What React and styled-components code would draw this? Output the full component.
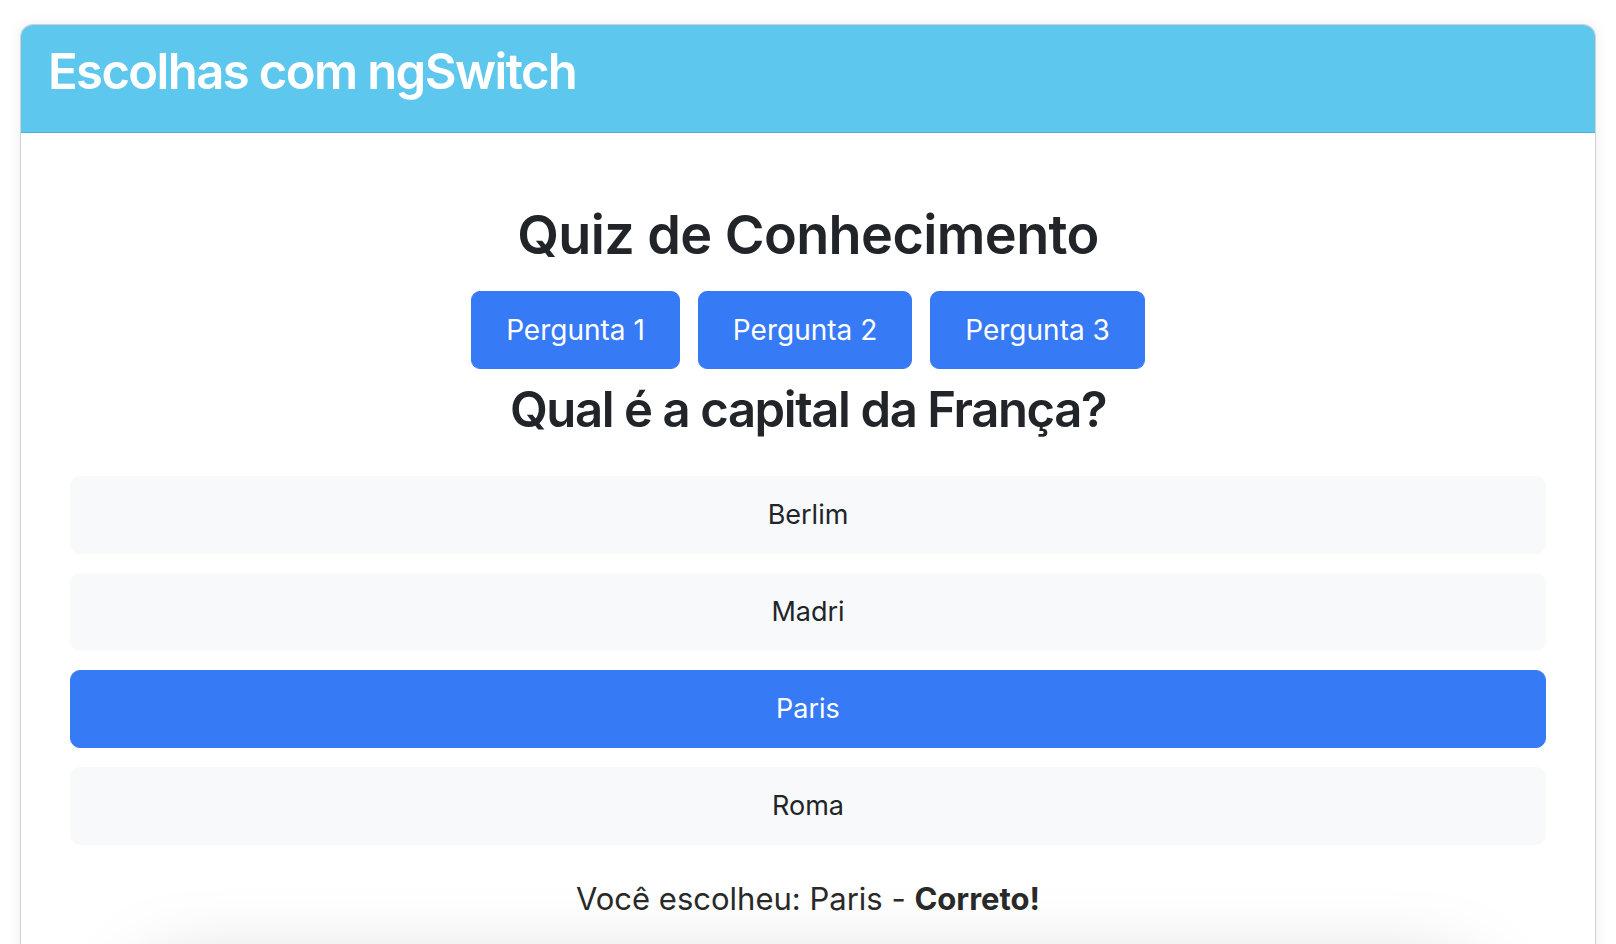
import React, { useState } from 'react';
import styled, { createGlobalStyle } from 'styled-components';

const COLORS = {
  text: '#212529',
  info: '#5ec7ed',
  infoBorder: '#4eaed3',
  primary: '#377af5',
  light: '#f8f9fa',
};

const QUESTIONS = [
  {
    title: 'Qual é a capital da França?',
    options: ['Berlim', 'Madri', 'Paris', 'Roma'],
    answer: 'Paris',
  },
  {
    title: 'Quanto é 2 + 2?',
    options: ['3', '4', '5', '22'],
    answer: '4',
  },
  {
    title: 'Qual é o maior planeta?',
    options: ['Terra', 'Marte', 'Júpiter', 'Vênus'],
    answer: 'Júpiter',
  },
];

const GlobalStyle = createGlobalStyle`
  * {
    box-sizing: border-box;
  }
  body {
    margin: 0;
    background: #ffffff;
    color: ${COLORS.text};
    font-family: Inter, "Noto Sans", "Liberation Sans", sans-serif;
  }
`;

const App = () => {
  const [current, setCurrent] = useState(0);
  const [choice, setChoice] = useState('Paris');
  const question = QUESTIONS[current];

  return (
    <Page>
      <GlobalStyle />
      <Card>
        <Header>
          <HeaderTitle>Escolhas com ngSwitch</HeaderTitle>
        </Header>
        <Body>
          <QuizTitle>Quiz de Conhecimento</QuizTitle>
          <ButtonRow>
            {QUESTIONS.map((q, i) => (
              <QuestionButton
                key={i}
                onClick={() => {
                  setCurrent(i);
                  setChoice(null);
                }}
              >
                Pergunta {i + 1}
              </QuestionButton>
            ))}
          </ButtonRow>
          <QuestionTitle>{question.title}</QuestionTitle>
          <OptionList>
            {question.options.map((opt) => (
              <Option
                key={opt}
                $active={choice === opt}
                onClick={() => setChoice(opt)}
              >
                {opt}
              </Option>
            ))}
          </OptionList>
          {choice && (
            <Result>
              Você escolheu: {choice} -{' '}
              <strong>{choice === question.answer ? 'Correto!' : 'Errado!'}</strong>
            </Result>
          )}
          <NextPanel />
        </Body>
      </Card>
    </Page>
  );
};

const Page = styled.div`
  padding: 24px 20px 40px;
`;

const Card = styled.div`
  border: 1px solid rgba(0, 0, 0, 0.18);
  border-radius: 13px;
  background: #ffffff;
  overflow: hidden;
  box-shadow: 0 0 14px rgba(0, 0, 0, 0.07);
`;

const Header = styled.div`
  background: ${COLORS.info};
  border-bottom: 1px solid ${COLORS.infoBorder};
  padding: 18px 27px 30px;
`;

const HeaderTitle = styled.h1`
  margin: 0;
  color: #ffffff;
  font-size: 49px;
  font-weight: 600;
  line-height: 1.2;
  letter-spacing: -1.6px;
`;

const Body = styled.div`
  padding: 70px 49px 0;
  display: flex;
  flex-direction: column;
  align-items: center;
`;

const QuizTitle = styled.h2`
  margin: 0 0 23px;
  font-size: 54px;
  font-weight: 600;
  line-height: 1.2;
  letter-spacing: -0.6px;
`;

const ButtonRow = styled.div`
  display: flex;
  gap: 18px;
`;

const QuestionButton = styled.button`
  border: 1px solid ${COLORS.primary};
  border-radius: 9px;
  background: ${COLORS.primary};
  color: #ffffff;
  font-family: inherit;
  font-size: 28px;
  font-weight: 400;
  line-height: 40px;
  padding: 18px 34px;
  cursor: pointer;
`;

const QuestionTitle = styled.h3`
  margin: 12px 0 37px;
  font-size: 49px;
  font-weight: 600;
  line-height: 1.2;
  letter-spacing: -1.4px;
`;

const OptionList = styled.div`
  align-self: stretch;
  display: flex;
  flex-direction: column;
  gap: 19px;
`;

const Option = styled.div`
  border: 1px solid ${(p) => (p.$active ? COLORS.primary : COLORS.light)};
  border-radius: 10px;
  background: ${(p) => (p.$active ? COLORS.primary : COLORS.light)};
  color: ${(p) => (p.$active ? '#ffffff' : COLORS.text)};
  text-align: center;
  font-size: 27px;
  line-height: 40px;
  padding: 18px;
  cursor: pointer;
`;

const Result = styled.p`
  margin: 31px 0 0;
  font-size: 31px;
  line-height: 1.5;
  color: #2a2a2a;
  strong {
    font-weight: 700;
  }
`;

const NextPanel = styled.div`
  align-self: stretch;
  margin: 60px 80px 0;
  height: 200px;
  border-radius: 24px;
  background: #ffffff;
  box-shadow: 0 0 90px rgba(0, 0, 0, 0.28);
`;

export default App;
